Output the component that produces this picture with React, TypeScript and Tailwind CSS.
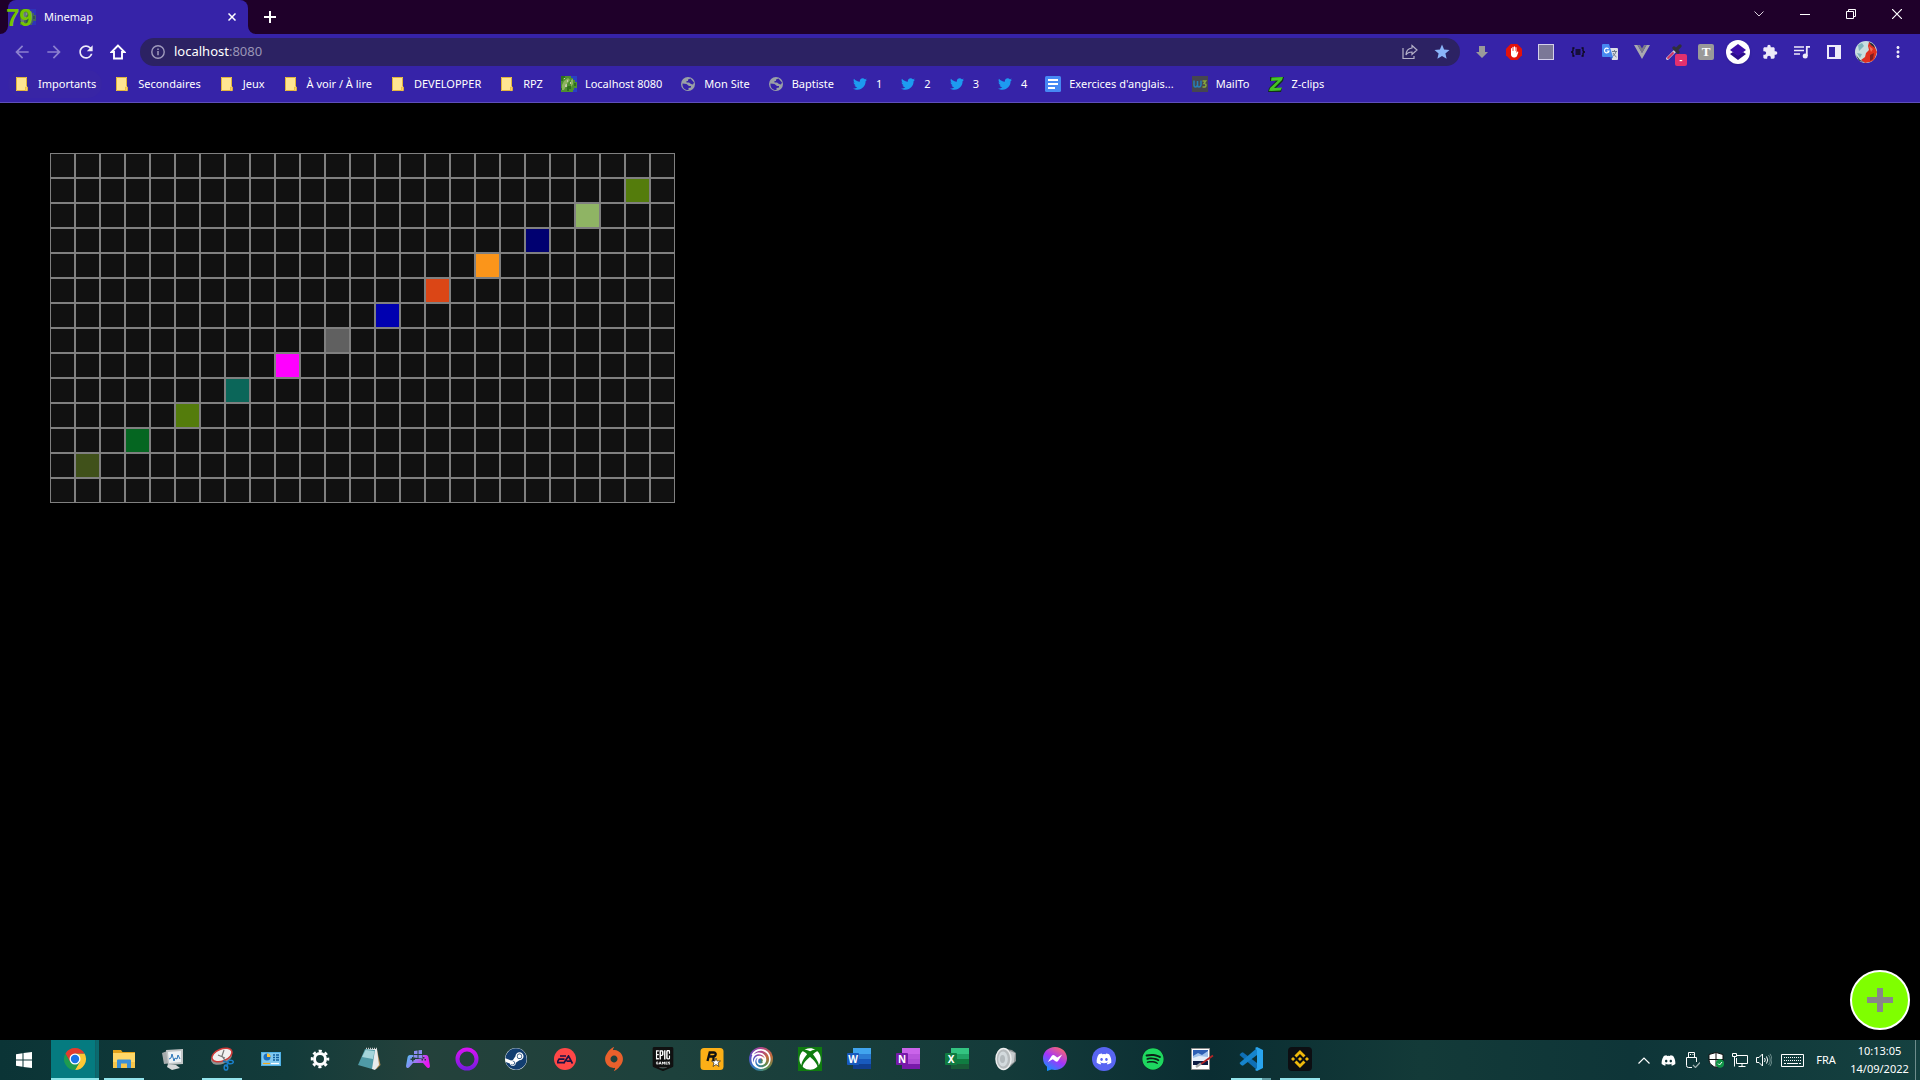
import type { ReactNode } from "react";
import { FaDiscord, FaSpotify, FaSteam, FaTwitter, FaXbox } from "react-icons/fa";
import { SiBinance, SiEpicgames, SiOrigin, SiUbisoft } from "react-icons/si";
import { MdArrowBack, MdArrowForward, MdExtension, MdMoreVert, MdRefresh, MdStar } from "react-icons/md";

type IconProps = { children: ReactNode; box?: string; className?: string };

function Svg({ children, box = "0 0 24 24", className = "size-6" }: IconProps) {
  return (
    <svg viewBox={box} className={className} fill="none" aria-hidden="true">
      {children}
    </svg>
  );
}

/* ---------- Tab strip ---------- */

const TerrainIcon = () => (
  <Svg box="0 0 16 16" className="size-4 shrink-0">
    <path fill="#4f9030" d="M0 0h16v16H0z" />
    <path fill="#2f701d" d="M0 0h4v2H2v3H0zM7 10h3v3H8v2H6v-4zM13 7h2v3h-2zM0 12h2v2H0z" />
    <path fill="#8cb35e" d="M3 5l4-3 2 2-3 4-3 6H1V9zM10 4l2-1v5l-2 3z" />
    <path fill="#c0c8a8" d="M6 4h1v2H6zM5 8h1v3H4V9zM9 6h1v2H9zM3 2h1v1H3z" />
    <path fill="#2a3fc4" d="M10 0h6v6h-2V4h-2V2h-2zM13 12h3v4h-4v-2h1z" />
  </Svg>
);

function TabStrip() {
  return (
    <header className="flex h-[34px] items-stretch justify-between bg-[#1f002a]">
      <div className="flex">
        <div className="flex items-end">
          <Svg box="0 0 8 8" className="size-2">
            <path fill="#3623a8" d="M8 0v8H0a8 8 0 0 0 8-8z" />
          </Svg>
        </div>
        <div className="relative flex w-60 items-center rounded-t-lg bg-[#3623a8] pr-2 pl-3 text-white">
          <span className="opacity-60">
            <TerrainIcon />
          </span>
          <span className="flex-1 pl-2 text-[11px]">Minemap</span>
          <button aria-label="Fermer l'onglet" className="grid size-4 place-items-center">
            <Svg box="0 0 8 8" className="size-2">
              <path d="M.5.5l7 7M7.500.5l-7 7" stroke="#fff" strokeWidth="1.500" />
            </Svg>
          </button>
          <span className="absolute top-[6px] -left-[2px] font-['Liberation_Sans'] text-2xl leading-6 font-bold text-[#76c400]">79</span>
        </div>
        <div className="flex items-end">
          <Svg box="0 0 8 8" className="size-2">
            <path fill="#3623a8" d="M0 0v8h8a8 8 0 0 1-8-8z" />
          </Svg>
        </div>
        <button aria-label="Nouvel onglet" className="grid w-7 place-items-center">
          <Svg box="0 0 12 12" className="size-3">
            <path d="M6 0v12M0 6h12" stroke="#fff" strokeWidth="2" />
          </Svg>
        </button>
      </div>
      <div className="flex h-7">
        <button aria-label="Rechercher dans les onglets" className="grid w-[46px] place-items-center">
          <Svg box="0 0 10 6" className="h-[6px] w-[10px]">
            <path d="M.5.500L5 5 9.500.500" stroke="#d9d0dc" />
          </Svg>
        </button>
        <button aria-label="Réduire" className="grid w-[46px] place-items-center">
          <span className="h-px w-[10px] bg-white" />
        </button>
        <button aria-label="Restaurer" className="grid w-[46px] place-items-center">
          <Svg box="0 0 10 10" className="size-[10px]">
            <path d="M.5 2.500h7v7h-7zM2.500 2.500v-2h7v7h-2" stroke="#fff" />
          </Svg>
        </button>
        <button aria-label="Fermer" className="grid w-[46px] place-items-center">
          <Svg box="0 0 10 10" className="size-[10px]">
            <path d="M0 0l10 10M10 0L0 10" stroke="#fff" strokeWidth="1.200" />
          </Svg>
        </button>
      </div>
    </header>
  );
}

/* ---------- Toolbar ---------- */

const extensions: { name: string; icon: ReactNode }[] = [
  {
    name: "Téléchargements",
    icon: (
      <Svg box="0 0 16 16" className="size-4">
        <path fill="#9a9a9a" d="M5 2h6v6h3l-6 6-6-6h3z" />
      </Svg>
    ),
  },
  {
    name: "AdBlock",
    icon: (
      <Svg box="0 0 16 16" className="size-4">
        <path fill="#e3120b" d="M4.700 0h6.600L16 4.700v6.600L11.300 16H4.700L0 11.300V4.700z" />
        <path fill="#fff" d="M5 4.500c0-.8 1-.8 1 0V7h.4V3.300c0-.8 1.100-.8 1.100 0V7h.4V2.800c0-.8 1.100-.8 1.100 0V7h.4V3.700c0-.8 1.100-.8 1.100 0V9l.8-1.200c.5-.6 1.200-.2 1 .4L11 12c-.4.900-1.200 1.400-2.300 1.400H8C6.200 13.400 5 12.200 5 10.500z" />
      </Svg>
    ),
  },
  { name: "Extension grise", icon: <span className="size-4 border border-[#d4d0ea] bg-[#7b7797]" /> },
  {
    name: "JSON",
    icon: (
      <Svg box="0 0 14 10" className="h-[10px] w-[14px]">
        <path stroke="#0c0818" strokeWidth="1.300" d="M3.500 1H2v3L.5 5 2 6v3h1.500M10.500 1H12v3l1.500 1L12 6v3h-1.500M4.500 3h5M4.500 5h5M4.500 7h5" />
      </Svg>
    ),
  },
  {
    name: "Google Traduction",
    icon: (
      <Svg box="0 0 16 16" className="size-4">
        <path fill="#dcdfe6" d="M7 4h8a1 1 0 0 1 1 1v10a1 1 0 0 1-1 1h-5z" />
        <path d="M10 7.500h5M12.500 6v1.500M14 7.500c-.5 2-2 4-3.500 5M11 9c.8 1.800 2 3 3.500 4" stroke="#6f7c8c" />
        <path fill="#4688f1" d="M1 0h6l4 13H1a1 1 0 0 1-1-1V1a1 1 0 0 1 1-1z" />
        <path fill="#2f63c8" d="M8 13h3l-2 3z" />
        <path d="M6.500 5A2.300 2.300 0 1 0 7 7H4.800" stroke="#fff" strokeWidth="1.200" />
      </Svg>
    ),
  },
  {
    name: "Vue",
    icon: (
      <Svg box="0 0 16 14" className="h-[14px] w-4">
        <path fill="#a9a9b0" d="M0 0h3.500L8 8l4.500-8H16L8 14z" />
        <path fill="#7c7c88" d="M3.500 0H6l2 3.500L10 0h2.500L8 8z" />
      </Svg>
    ),
  },
  {
    name: "Pipette",
    icon: (
      <span className="relative grid size-4 place-items-center">
        <Svg box="0 0 16 16" className="size-4">
          <path d="M1.500 14.500L9.500 6.500" stroke="#cfc8d8" strokeWidth="3" strokeLinecap="round" />
          <path d="M2 14l5-5" stroke="#d03062" strokeWidth="1.800" strokeLinecap="round" />
          <path d="M8 4l4 4M10.500 5.500L14 2" stroke="#30303a" strokeWidth="3.200" strokeLinecap="round" />
        </Svg>
        <span className="absolute top-[10px] left-[9px] grid h-3 w-3 place-items-center rounded-xs bg-[#e3306e] text-[9px] leading-3 font-bold text-white">-</span>
      </span>
    ),
  },
  {
    name: "Extension T",
    icon: (
      <span className="grid size-4 place-items-center rounded-xs bg-[#999] font-['Liberation_Serif'] text-[13px] leading-4 font-bold text-white">T</span>
    ),
  },
  {
    name: "Calques",
    icon: (
      <span className="grid size-6 place-items-center rounded-full bg-white shadow">
        <Svg box="0 0 16 16" className="size-4">
          <path fill="#2c0d8c" d="M0 10l3-2 5 3 5-3 3 2-8 6z" />
          <path fill="#3d10a8" d="M8 0l8 6-8 6-8-6z" />
        </Svg>
      </span>
    ),
  },
  { name: "Extensions", icon: <MdExtension className="size-4 text-[#eeebf9]" /> },
  {
    name: "Contrôle multimédia",
    icon: (
      <Svg box="0 0 16 14" className="h-[14px] w-4">
        <path d="M0 2h10M0 5.500h10M0 9h6" stroke="#eeebf9" strokeWidth="1.600" />
        <path d="M12.800 11V1.800H16" stroke="#eeebf9" strokeWidth="1.800" />
        <circle cx="11.200" cy="11" r="2.500" fill="#eeebf9" />
      </Svg>
    ),
  },
  {
    name: "Panneau latéral",
    icon: (
      <Svg box="0 0 14 14" className="size-[14px]">
        <path fill="#eeebf9" fillRule="evenodd" d="M0 0h14v14H0zM2 2v10h6V2z" />
      </Svg>
    ),
  },
  {
    name: "Profil",
    icon: (
      <Svg box="0 0 22 22" className="size-[22px] rounded-full">
        <path fill="#c9dfe0" d="M0 0h22v22H0z" />
        <path fill="#e03020" d="M14 1l5 3 3 7-3 9-9 2-4-3 4-3 1-4 3-3-1-4z" />
        <path fill="#7fb4bd" d="M3 4l4-2 2 3-5 5zM2 12l5 1-2 4z" />
        <path fill="#7d1d22" d="M15 14l4-2-1 6-3 2z" />
        <path fill="#f2705c" d="M14 5l4 3-2 3z" />
        <path fill="#24323c" d="M14 1l4 2 2 4-4-3zM1 14l4 5 4 2-5-1z" />
      </Svg>
    ),
  },
  { name: "Menu", icon: <MdMoreVert className="size-[18px] text-[#eeebf9]" /> },
];

function Toolbar() {
  return (
    <div className="flex h-[34px] items-center pt-[2px] pr-[6px] pl-[6px]">
      <nav className="flex text-[#eeebf9]" aria-label="Navigation">
        <button aria-label="Retour" className="grid size-8 place-items-center text-[#8c80cf]">
          <MdArrowBack className="size-5" />
        </button>
        <button aria-label="Avancer" className="grid size-8 place-items-center text-[#8c80cf]">
          <MdArrowForward className="size-5" />
        </button>
        <button aria-label="Actualiser" className="grid size-8 place-items-center">
          <MdRefresh className="size-5" />
        </button>
        <button aria-label="Accueil" className="grid size-8 place-items-center">
          <Svg box="0 0 16 16" className="size-4">
            <path d="M8 1.500L1.500 8H4v6.500h8V8h2.500z" stroke="#fff" strokeWidth="1.900" />
          </Svg>
        </button>
      </nav>
      <div className="mr-[6px] ml-[6px] flex h-7 flex-1 items-center rounded-full bg-[#2c2263] pr-[2px] pl-[11px]">
        <Svg box="0 0 14 14" className="size-[14px] shrink-0">
          <circle cx="7" cy="7" r="6.200" stroke="#a09bbd" strokeWidth="1.400" />
          <path d="M7 6v4.300M7 3.500V5" stroke="#a09bbd" strokeWidth="1.500" />
        </Svg>
        <div role="textbox" aria-label="Adresse" className="flex-1 pl-[9px] text-[13px] text-white">
          localhost<span className="text-[#9a95b6]">:8080</span>
        </div>
        <button aria-label="Partager" className="grid size-8 place-items-center">
          <Svg box="0 0 16 16" className="size-4">
            <path d="M1 4v10.500h11V12" stroke="#b5b1c9" strokeWidth="1.200" />
            <path d="M10 1.500L15 6l-5 4.500V8C7 8 5.200 8.800 4 11c0-4 2.500-6.500 6-7z" stroke="#b5b1c9" strokeWidth="1.200" />
          </Svg>
        </button>
        <button aria-label="Favori" className="grid size-8 place-items-center">
          <MdStar className="size-[18px] text-[#8ab4f8]" />
        </button>
      </div>
      <div className="flex">
        {extensions.map((e) => (
          <button key={e.name} aria-label={e.name} className="grid size-8 place-items-center">
            {e.icon}
          </button>
        ))}
      </div>
    </div>
  );
}

/* ---------- Bookmarks ---------- */

const Folder = () => (
  <Svg box="0 0 16 16" className="size-4 shrink-0">
    <path fill="#ffe592" d="M2 1h11v14H2z" />
    <path stroke="#e2b53c" d="M2.500 1.500h10V10M2.500 1.500v13h9" />
    <path fill="#ffd35c" stroke="#e8b93e" strokeWidth=".8" d="M11.500 11h2v3.600h-2z" />
  </Svg>
);
const Globe = () => (
  <Svg box="0 0 16 16" className="size-4 shrink-0">
    <circle cx="8" cy="8" r="7" fill="#9aa0a6" />
    <path fill="#3623a8" d="M2.500 7.500l4 .5 2.500 2h2v1.500L8.500 12v2C5 14.500 2 11.500 2.500 7.500zM8 3.500l2.500-1 3.500 4-1 2-2-.5-2-1.500H6.500V5H8z" />
  </Svg>
);
const Bird = () => <FaTwitter className="size-4 shrink-0 p-px text-[#1d9bf0]" />;
const Doc = () => (
  <Svg box="0 0 16 16" className="size-4 shrink-0">
    <rect width="16" height="16" rx="1.500" fill="#4688f4" />
    <path d="M3 4h10M3 8h10M3 12h7" stroke="#fff" strokeWidth="2" />
  </Svg>
);
const W3 = () => (
  <span className="grid size-4 shrink-0 place-items-center bg-[#464650]">
    <Svg box="0 0 14 8" className="h-2 w-[14px]">
      <path d="M1 .5v4.500q0 2 1.500 2T4.500 5V1v4q0 2 1.500 2t2-2V.5" stroke="#2580b8" strokeWidth="1.500" />
      <path d="M9.500 1h3.200L11 3.500q2 0 2 1.800T11 7H9.500" stroke="#86a83a" strokeWidth="1.500" />
    </Svg>
  </span>
);
const ZIcon = () => (
  <Svg box="0 0 16 16" className="size-4 shrink-0">
    <path fill="#12301c" d="M2 1h14l-1 4-7 7h6l-1 4H0l1-4 7-7H2z" />
    <path fill="#44c626" d="M3.500 1.500L15 1l-1 3-8 8 8-.5-1.500 3L1 15l1-3 8-7.500-7 .5z" />
  </Svg>
);

const bookmarks: { label: string; icon: ReactNode }[] = [
  { label: "Importants", icon: <Folder /> },
  { label: "Secondaires", icon: <Folder /> },
  { label: "Jeux", icon: <Folder /> },
  { label: "À voir / À lire", icon: <Folder /> },
  { label: "DEVELOPPER", icon: <Folder /> },
  { label: "RPZ", icon: <Folder /> },
  { label: "Localhost 8080", icon: <TerrainIcon /> },
  { label: "Mon Site", icon: <Globe /> },
  { label: "Baptiste", icon: <Globe /> },
  { label: "1", icon: <Bird /> },
  { label: "2", icon: <Bird /> },
  { label: "3", icon: <Bird /> },
  { label: "4", icon: <Bird /> },
  { label: "Exercices d'anglais...", icon: <Doc /> },
  { label: "MailTo", icon: <W3 /> },
  { label: "Z-clips", icon: <ZIcon /> },
];

function Bookmarks() {
  return (
    <nav aria-label="Favoris" className="flex h-[35px] items-center gap-[6px] border-b border-[#5e4fba] px-2 pb-[2px]">
      {bookmarks.map((b) => (
        <a key={b.label} href="#" className="flex h-7 items-center gap-2 rounded-full px-[6px] text-[11px] whitespace-nowrap text-white first:bg-[#3825a5]">
          {b.icon}
          {b.label}
        </a>
      ))}
    </nav>
  );
}

/* ---------- Page ---------- */

const COLUMNS = 25;
const ROWS = 14;

const painted: Record<string, string> = {
  "1:23": "bg-[#547c0c]",
  "2:21": "bg-[#8fb464]",
  "3:19": "bg-[#000070]",
  "4:17": "bg-[#fb951a]",
  "5:15": "bg-[#db4616]",
  "6:13": "bg-[#0000b0]",
  "7:11": "bg-[#606060]",
  "8:9": "bg-[#ff00ff]",
  "9:7": "bg-[#0b6659]",
  "10:5": "bg-[#547c0c]",
  "11:3": "bg-[#056621]",
  "12:1": "bg-[#40511a]",
};

function MapPage() {
  const cells = Array.from({ length: COLUMNS * ROWS }, (_, i) => `${Math.floor(i / COLUMNS)}:${i % COLUMNS}`);
  return (
    <main className="relative flex-1 bg-black p-[50px]">
      <div className="grid w-max grid-cols-[repeat(25,25px)]">
        {cells.map((id) => (
          <div key={id} className={`h-[25px] border border-[#808080] ${painted[id] ?? "bg-[#111]"}`} />
        ))}
      </div>
      <button aria-label="Ajouter" className="absolute right-[10px] bottom-[10px] grid size-[60px] place-items-center rounded-full border-2 border-white bg-[#7fff00]">
        <Svg box="0 0 26 24" className="h-6 w-[26px]">
          <path d="M13 0v24M0 12h26" stroke="#888" strokeWidth="6" />
        </Svg>
      </button>
    </main>
  );
}

/* ---------- Taskbar ---------- */

const OfficeIcon = ({ letter, tile, shades }: { letter: string; tile: string; shades: string[] }) => (
  <span className="relative block size-6">
    <Svg className="size-6">
      <path fill={shades[0]} d="M6 1h18v6H6z" />
      <path fill={shades[1]} d="M6 7h18v5H6z" />
      <path fill={shades[2]} d="M6 12h18v5H6z" />
      <path fill={shades[3]} d="M6 17h18v5H6z" />
      <rect y="6" width="12" height="12" rx="1" fill={tile} />
    </Svg>
    <span className="absolute top-[6px] left-0 w-3 text-center text-[10px] leading-3 font-bold text-white">{letter}</span>
  </span>
);

type TaskApp = { name: string; icon: ReactNode; state?: "active" | "open" | "stacked" };

const apps: TaskApp[] = [
  {
    name: "Google Chrome",
    state: "active",
    icon: (
      <Svg className="size-6">
        <path fill="#fcc934" d="M12 6.500h9.530A11 11 0 0 1 12 23l4.760-8.250z" />
        <path fill="#1e9b4f" d="M2.470 6.500A11 11 0 0 0 12 23l4.760-8.250H7.240z" />
        <path fill="#e33b2e" d="M2.470 6.500A11 11 0 0 1 21.530 6.500H12l-4.760 8.250z" />
        <circle cx="12" cy="12" r="5.500" fill="#fff" />
        <circle cx="12" cy="12" r="4.200" fill="#1a73e8" />
      </Svg>
    ),
  },
  {
    name: "Explorateur",
    state: "open",
    icon: (
      <Svg className="size-6">
        <path fill="#e3a21a" d="M1 3h8l1.500 2H23v4H1z" />
        <path fill="#ffd767" d="M1 6h22v15H1z" />
        <path fill="#f7c64a" d="M1 15h22v6H1z" />
        <path fill="#3b8fd6" d="M5 13.500a1 1 0 0 1 1-1h12a1 1 0 0 1 1 1V21h-4v-4.500H9V21H5z" />
      </Svg>
    ),
  },
  {
    name: "Moniteur de ressources",
    icon: (
      <Svg className="size-6">
        <path fill="#a7acad" d="M1 6l8-3 2 13-8 1z" />
        <path fill="#d6d9da" d="M7 17l8 1 4 3-8 2-5-3z" />
        <path fill="#c2c6c7" d="M5 3l17-1v15l-15 1z" />
        <path fill="#eef3f6" d="M7 5l13-1v11l-12 1z" />
        <path d="M8 12l2-1 1-4 2 7 1-3 2 1 1-4 2 4" stroke="#2874b8" />
      </Svg>
    ),
  },
  {
    name: "Outil Capture",
    state: "open",
    icon: (
      <Svg className="size-6">
        <ellipse cx="11.500" cy="10.500" rx="11" ry="6.500" transform="rotate(-22 11.500 10.500)" fill="#8f9292" />
        <ellipse cx="12" cy="8" rx="10.500" ry="6" transform="rotate(-22 12 8)" fill="#f1f1f1" stroke="#cf3a38" strokeWidth="1.500" />
        <path d="M8 8l7 3M14 3l-2 6 4 6" stroke="#777" strokeWidth="1.200" />
        <path d="M13 14l5 2-2 4" stroke="#1b74b8" strokeWidth="1.500" />
        <ellipse cx="20.500" cy="15" rx="2.800" ry="1.800" stroke="#1b7fc8" strokeWidth="1.500" />
        <ellipse cx="16" cy="20.500" rx="1.800" ry="2.600" stroke="#1b7fc8" strokeWidth="1.500" />
      </Svg>
    ),
  },
  {
    name: "Panneau de configuration",
    icon: (
      <Svg className="size-6">
        <path fill="#4fb0e6" d="M2 5h20v14H2z" />
        <path fill="#bfe6fa" d="M3 6h18v12H3z" opacity=".45" />
        <circle cx="8" cy="10" r="3.500" fill="#1d6fc0" />
        <path fill="#ffc233" d="M8 10V6.500a3.500 3.500 0 0 1 3.500 3.500z" />
        <path d="M14 8h2M17 8h3M14 10.500h2M17 10.500h3M14 13h2M17 13h3" stroke="#0f5c9c" strokeWidth="1.400" />
        <path d="M4 16.500h7" stroke="#f0a81c" strokeWidth="1.200" />
        <path d="M12 16.500h8" stroke="#fff" strokeWidth="1.200" />
      </Svg>
    ),
  },
  {
    name: "Paramètres",
    icon: (
      <Svg className="size-6">
        <circle cx="12" cy="12" r="5.500" stroke="#fff" strokeWidth="3" />
        <circle cx="12" cy="12" r="8" stroke="#fff" strokeWidth="2.500" strokeDasharray="3.140 3.140" strokeDashoffset="1.570" />
      </Svg>
    ),
  },
  {
    name: "Bloc-notes",
    icon: (
      <Svg className="size-6">
        <path fill="#b48c52" d="M20 3l3.500 15-4 4-2-1z" />
        <path fill="#e9ecec" d="M9 2h11l2 16-4 5-3-1z" />
        <path fill="#4f9aa6" d="M8 2l10 1-3 19-14-4z" />
        <path fill="#a4d5da" d="M8.500 3l9 1-1.500 8-11-2z" />
        <path d="M9 1.500h12" stroke="#c9c9c9" strokeDasharray="1 1" strokeWidth="1.500" />
      </Svg>
    ),
  },
  {
    name: "Manette",
    icon: (
      <Svg className="size-6">
        <defs>
          <linearGradient id="pad" x1="0" y1="0" x2="1" y2=".3">
            <stop offset="0" stopColor="#54c3f5" />
            <stop offset=".5" stopColor="#9a78f2" />
            <stop offset="1" stopColor="#e815f0" />
          </linearGradient>
        </defs>
        <path fill="url(#pad)" fillRule="evenodd" d="M4 8h16c1.500 0 2.200 1 2.500 2.500l1.400 8c.3 2.500-2 3.400-3.400 1.500L17 16H7l-3.500 4C2.100 21.900-.2 21 .1 18.500l1.400-8C1.800 9 2.500 8 4 8zm2 2v1.500H4.500V13H6v1.500h1.500V13H9v-1.500H7.500V10zm11 0v1.500h1.500V10zm-1.500 2v1.500H17V12zm3 0v1.500H20V12z" />
        <path fill="#214039" d="M7.500 2.500h9V12h-9z" />
        <path fill="#8c8cf2" d="M8 4l3.500-.5V7H8zM12.500 3.300L16 3v4h-3.500zM8 8h3.500v3L8 10.500zM12.500 8H16v3.500l-3.500-.3z" />
      </Svg>
    ),
  },
  {
    name: "Opera GX",
    icon: (
      <Svg className="size-6">
        <defs>
          <linearGradient id="ring" x1="0" y1="0" x2="0" y2="1">
            <stop offset="0" stopColor="#d413f2" />
            <stop offset="1" stopColor="#7b1be0" />
          </linearGradient>
        </defs>
        <circle cx="12" cy="12" r="9.500" stroke="url(#ring)" strokeWidth="4" />
      </Svg>
    ),
  },
  {
    name: "Steam",
    icon: (
      <span className="grid size-[22px] place-items-center rounded-full bg-white">
        <FaSteam className="size-[22px] text-[#123e70]" />
      </span>
    ),
  },
  {
    name: "EA",
    icon: (
      <span className="grid size-[22px] place-items-center rounded-full bg-[#ff4747]">
        <Svg box="0 0 16 9" className="h-[9px] w-4">
          <path d="M3 1h6M1.500 4.200h6M7.500 7.700H0l2-3.500M6.500 8.500L11.500 1l4 7.500M9.500 6.200h4.500" stroke="#1c1245" strokeWidth="1.700" />
        </Svg>
      </span>
    ),
  },
  { name: "Origin", icon: <SiOrigin className="size-6 text-[#e9602c]" /> },
  { name: "Epic Games", icon: <SiEpicgames className="size-6 bg-[linear-gradient(#fff,#fff)] bg-[length:14px_18px] bg-center bg-no-repeat text-[#101010]" /> },
  {
    name: "Rockstar Games",
    icon: (
      <Svg className="size-6">
        <rect x=".5" y="1" width="23" height="22" rx="3.500" fill="#fcaf17" />
        <path d="M7.500 14L9.700 5.500h4c3.200 0 2.300 4-.7 4H9M12 9.500c2.500 0 1 2.500 1.500 4.500" stroke="#111" strokeWidth="2.300" />
        <path fill="#fff" stroke="#111" strokeWidth=".6" d="M16 11l1 3h3.500L18 16l1 3.500-3-2-3 2 1-3.500-2.500-2H15z" />
      </Svg>
    ),
  },
  {
    name: "Ubisoft Connect",
    icon: (
      <span className="grid size-6 place-items-center rounded-full bg-[conic-gradient(#b0448c,#c46a3c,#5a8c4c,#2a7cc0,#5c4cc0,#b0448c)]">
        <SiUbisoft className="size-5 text-white" />
      </span>
    ),
  },
  {
    name: "Xbox",
    icon: (
      <span className="grid size-6 place-items-center bg-[#107c10]">
        <FaXbox className="size-[22px] text-white" />
      </span>
    ),
  },
  { name: "Word", icon: <OfficeIcon letter="W" tile="#185abd" shades={["#41a5ee", "#2b7cd3", "#185abd", "#103f91"]} /> },
  { name: "OneNote", icon: <OfficeIcon letter="N" tile="#7719aa" shades={["#ca64ea", "#b854dc", "#ae4bd5", "#7719aa"]} /> },
  { name: "Excel", icon: <OfficeIcon letter="X" tile="#107c41" shades={["#33c481", "#21a366", "#107c41", "#185c37"]} /> },
  {
    name: "Son",
    icon: (
      <Svg className="size-6">
        <path fill="#8b9092" d="M12 2l6 1 4 3v8l-6 6-7 3z" />
        <path fill="#c6cbcd" d="M16 4l5 2-1 9-4 3z" />
        <ellipse cx="9.500" cy="12" rx="7.500" ry="10.500" fill="#b6bbbd" stroke="#eceeee" strokeWidth="1.500" />
        <ellipse cx="9" cy="12" rx="4.800" ry="7.500" fill="#d3dadd" />
        <ellipse cx="8.500" cy="12" rx="2.500" ry="4" fill="#b3babd" />
      </Svg>
    ),
  },
  {
    name: "Messenger",
    icon: (
      <Svg className="size-6">
        <defs>
          <linearGradient id="msg" x1=".2" y1="1" x2=".8" y2="0">
            <stop offset="0" stopColor="#0a95ff" />
            <stop offset=".5" stopColor="#a334fa" />
            <stop offset="1" stopColor="#ff6a68" />
          </linearGradient>
        </defs>
        <path fill="url(#msg)" d="M12 0c7 0 12 5 12 11.300S19 23 12 23c-1.300 0-2.400-.2-3.500-.5L4 24v-4.200C1.500 17.800 0 15 0 11.300 0 5 5 0 12 0z" />
        <path fill="#fff" d="M4.800 15l4-6.200q1.200-1.500 2.800-.4l2.600 2 5-2.900-4 6.300q-1.200 1.500-2.800.4l-2.600-2z" />
      </Svg>
    ),
  },
  {
    name: "Discord",
    icon: (
      <span className="grid size-6 place-items-center rounded-full bg-[#5865f2]">
        <FaDiscord className="size-4 text-white" />
      </span>
    ),
  },
  {
    name: "Spotify",
    icon: (
      <span className="grid size-[22px] place-items-center rounded-full bg-[#0b2016]">
        <FaSpotify className="size-[22px] text-[#1ed760]" />
      </span>
    ),
  },
  {
    name: "Paint",
    icon: (
      <Svg className="size-6">
        <path fill="#fff" stroke="#8a8a8a" d="M1.500 1.500h18v21h-18z" />
        <path fill="#2d5fb4" d="M3 3h15v10H3z" />
        <path fill="#9fc2ec" d="M3 9l5-3 4 2 6-4v9H3z" />
        <path fill="#e3eefa" d="M3 11l6-2 9 1v4H3z" />
        <path fill="#0d1b42" d="M3 14h15v4H3z" />
        <path d="M11 17L23 8.500" stroke="#b32424" strokeWidth="1.800" />
        <path d="M6 20l5-3.500" stroke="#a8a8a8" strokeWidth="2.500" />
      </Svg>
    ),
  },
  {
    name: "Visual Studio Code",
    state: "stacked",
    icon: (
      <Svg className="size-6">
        <path fill="#0f6fb5" d="M2 6l1.800-.8L18 16v7L.5 8z" />
        <path fill="#1684cc" d="M18 1v7L3.800 18.800 2 18l-1.500-2z" />
        <path fill="#29a4ee" d="M18 0l6 3v18l-6 3-2-1 2-2V3l-2-2z" />
      </Svg>
    ),
  },
  {
    name: "Binance",
    state: "open",
    icon: (
      <span className="grid size-6 place-items-center rounded bg-[#0c0e12]">
        <SiBinance className="size-[18px] text-[#f0b90b]" />
      </span>
    ),
  },
];

function TaskButton({ app }: { app: TaskApp }) {
  if (app.state === "active") {
    return (
      <button aria-label={app.name} className="flex w-12 flex-col border-b-2 border-[#8fe6e9] bg-[linear-gradient(to_right,#057b80_44px,#16595f_44px,#0b6a6f_45px)]">
        <span className="grid w-full flex-1 place-items-center">{app.icon}</span>
      </button>
    );
  }
  return (
    <button aria-label={app.name} className="flex w-12 flex-col items-center">
      <span className="grid w-full flex-1 place-items-center">{app.icon}</span>
      <span
        className={
          app.state === "open"
            ? "h-[2px] w-10 bg-[#94e4ec]"
            : app.state === "stacked"
              ? "h-[2px] w-10 bg-[linear-gradient(to_right,#94e4ec_31px,#5d9ba2_31px)]"
              : "h-[2px] w-10"
        }
      />
    </button>
  );
}

const tray: { name: string; icon: ReactNode }[] = [
  {
    name: "Icônes cachées",
    icon: (
      <Svg box="0 0 12 7" className="h-[7px] w-3">
        <path d="M.5 6.500L6 1l5.500 5.500" stroke="#fff" strokeWidth="1.200" />
      </Svg>
    ),
  },
  { name: "Discord", icon: <FaDiscord className="size-[15px] text-white" /> },
  {
    name: "Retirer le périphérique",
    icon: (
      <Svg box="0 0 16 16" className="size-4">
        <path d="M4.500 5V.5h6V5M2.500 5.500h10V10M2.500 5.500v8q0 2 2 2H8M6 2.500h1M8.500 2.500h1" stroke="#fff" />
        <path d="M9 13l2.500 2.500L16 10.500" stroke="#9fb0b0" strokeWidth="1.200" />
      </Svg>
    ),
  },
  {
    name: "Sécurité Windows",
    icon: (
      <Svg box="0 0 16 16" className="size-4">
        <path fill="#fff" stroke="#111" d="M8 .5l7 2v5c0 4-3 6.500-7 8-4-1.500-7-4-7-8v-5z" />
        <path d="M8 1v14M1 7.500h14" stroke="#111" />
        <circle cx="12" cy="11.500" r="4.300" fill="#109447" />
        <path d="M10 11.500l1.500 1.500 2.500-3" stroke="#fff" />
      </Svg>
    ),
  },
  {
    name: "Réseau",
    icon: (
      <Svg box="0 0 16 14" className="h-[14px] w-4">
        <path d="M4.500 2.500h11v8h-11V5M10 10.500v3M6.500 13.500h7M.5.500h4v3h-4zM2.500 3.500v10" stroke="#fff" />
      </Svg>
    ),
  },
  {
    name: "Volume",
    icon: (
      <Svg box="0 0 16 14" className="h-[14px] w-4">
        <path d="M.5 4.500h2.500l3.500-3.500v12L3 9.500H.5z" stroke="#fff" />
        <path d="M8.500 5q1.500 2 0 4M10.500 3.500q2.500 3.500 0 7" stroke="#fff" />
        <path d="M12.500 2q3.500 5 0 10M14 .8q4 6 0 12.400" stroke="#6f8f8e" />
      </Svg>
    ),
  },
];

function Taskbar() {
  return (
    <footer className="flex h-10 justify-between bg-[linear-gradient(to_right,#0b3436_0%,#133b3a_15%,#24413b_22%,#1d413c_35%,#143b3a_52%,#0a2d32_63%,#133a38_74%,#0e3538_85%,#154140_100%)]">
      <div className="flex gap-px">
        <button aria-label="Démarrer" className="mr-[2px] grid w-12 place-items-center">
          <Svg box="0 0 16 16" className="size-4">
            <path fill="#fff" d="M0 2.200L6.500 1.300V7.500H0zM7.500 1.100L16 0v7.500H7.500zM0 8.500h6.500v6.200L0 13.800zM7.500 8.500H16V16l-8.500-1.100z" />
          </Svg>
        </button>
        {apps.map((a) => (
          <TaskButton key={a.name} app={a} />
        ))}
      </div>
      <div className="flex items-center text-[11px] text-white">
        {tray.map((t) => (
          <button key={t.name} aria-label={t.name} className="grid h-10 w-6 place-items-center">
            {t.icon}
          </button>
        ))}
        <button aria-label="Clavier tactile" className="grid h-10 w-8 place-items-center">
          <Svg box="0 0 23 13" className="h-[13px] w-[23px]">
            <path d="M.5.500h22v12H.5z" stroke="#fff" />
            <path d="M3 3.500h17M3 6.500h17" stroke="#fff" strokeDasharray="1 1" />
            <path d="M3 9.500h2M6 9.500h11M18 9.500h2" stroke="#fff" />
          </Svg>
        </button>
        <button className="h-10 w-9 text-center">FRA</button>
        <button className="flex h-10 w-[72px] flex-col items-center justify-center border-r border-[#6e8d8c] leading-[18px]">
          <span>10:13:05</span>
          <span>14/09/2022</span>
        </button>
        <button aria-label="Afficher le bureau" className="h-10 w-1" />
      </div>
    </footer>
  );
}

export default function App() {
  return (
    <div className="flex min-h-screen flex-col bg-black font-['Noto_Sans',sans-serif]">
      <TabStrip />
      <div className="bg-[#3623a8]">
        <Toolbar />
        <Bookmarks />
      </div>
      <MapPage />
      <Taskbar />
    </div>
  );
}
